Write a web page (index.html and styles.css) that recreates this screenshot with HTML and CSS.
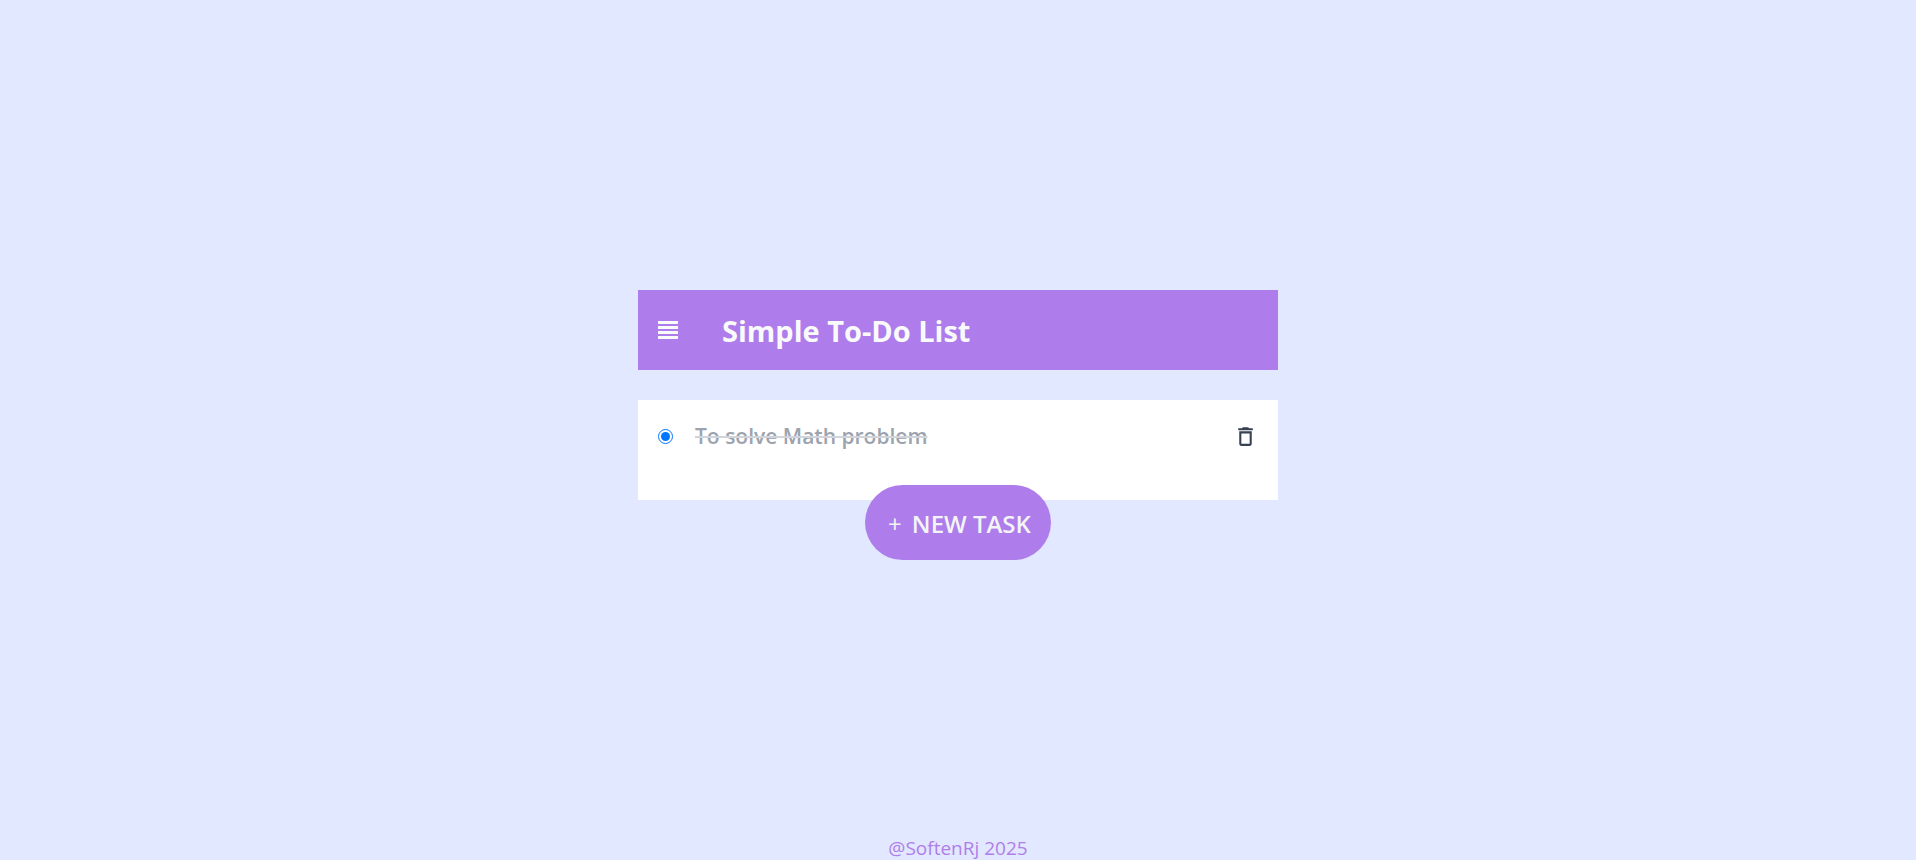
FILE: index.html
```html
<!DOCTYPE html>
<html lang="en">
<head>
<meta charset="utf-8">
<meta name="viewport" content="width=device-width, initial-scale=1">
<title>Simple To-Do List</title>
<link rel="stylesheet" href="styles.css">
</head>
<body>
<main class="main">
  <div class="todo">
    <header class="header">
      <svg class="menu-icon" viewBox="0 0 20 20" fill="currentColor" aria-hidden="true">
        <path d="M0 1h20v3H0zM0 6h20v3H0zM0 11h20v3H0zM0 16h20v3H0z"/>
      </svg>
      <h1 class="title">Simple To-Do List</h1>
    </header>
    <ul class="tasks">
      <li class="task">
        <input class="task-radio" type="radio" id="task-1" checked>
        <label class="task-label" for="task-1">To solve Math problem</label>
        <button class="delete" type="button" aria-label="Delete task">
          <svg class="delete-icon" viewBox="0 0 24 24" fill="currentColor" aria-hidden="true">
            <path d="M16 9v10H8V9h8m-1.500-6h-5l-1 1H5v2h14V4h-3.500l-1-1zM18 7H6v12c0 1.100.9 2 2 2h8c1.100 0 2-.9 2-2V7z"/>
          </svg>
        </button>
      </li>
    </ul>
    <button class="new-task" type="button"><span class="plus">+</span><span>NEW TASK</span></button>
  </div>
</main>
<footer class="footer">@SoftenRj 2025</footer>
</body>
</html>
```
FILE: styles.css
```css
* {
  box-sizing: border-box;
  margin: 0;
  padding: 0;
}

body {
  min-height: 100vh;
  display: flex;
  flex-direction: column;
  background: #e2e8ff;
  font-family: "Segoe UI", "Open Sans", "Noto Sans", sans-serif;
}

.main {
  flex: 1;
  display: flex;
  align-items: center;
  justify-content: center;
  padding-top: 14px;
}

.todo {
  width: 100%;
  max-width: 640px;
  display: flex;
  flex-direction: column;
  align-items: center;
}

.header {
  width: 100%;
  min-height: 80px;
  display: flex;
  align-items: center;
  gap: 44px;
  padding: 20px;
  background: #ae7deb;
  color: #f9fafb;
}

.menu-icon {
  width: 20px;
  height: 20px;
}

.title {
  padding-top: 2px;
  font-size: 29px;
  font-weight: 700;
  line-height: 38px;
}

.tasks {
  width: 100%;
  min-height: 100px;
  margin-top: 30px;
  padding: 20px;
  background: #fff;
  list-style: none;
}

.task {
  display: flex;
  align-items: center;
  min-height: 32px;
}

.task-radio {
  width: 15px;
  height: 15px;
  margin-right: 22px;
  accent-color: #0075ff;
}

.task-label {
  flex: 1;
  color: #9ca3af;
  font-size: 21px;
  font-weight: 600;
  line-height: 32px;
  text-decoration: line-through 2px #d1d5db;
}

.delete {
  display: flex;
  border: 0;
  background: none;
  color: #374151;
  cursor: pointer;
}

.delete-icon {
  width: 25px;
  height: 25px;
}

.new-task {
  display: flex;
  align-items: center;
  gap: 10px;
  height: 75px;
  margin-top: -15px;
  padding: 2px 20px 0 23px;
  border: 0;
  border-radius: 40px;
  background: #ae7deb;
  color: #f3f4f6;
  font-family: inherit;
  font-size: 24px;
  font-weight: 600;
  cursor: pointer;
}

.plus {
  font-weight: 400;
}

.footer {
  color: #b07eeb;
  font-size: 19px;
  line-height: 24px;
  text-align: center;
}
```
